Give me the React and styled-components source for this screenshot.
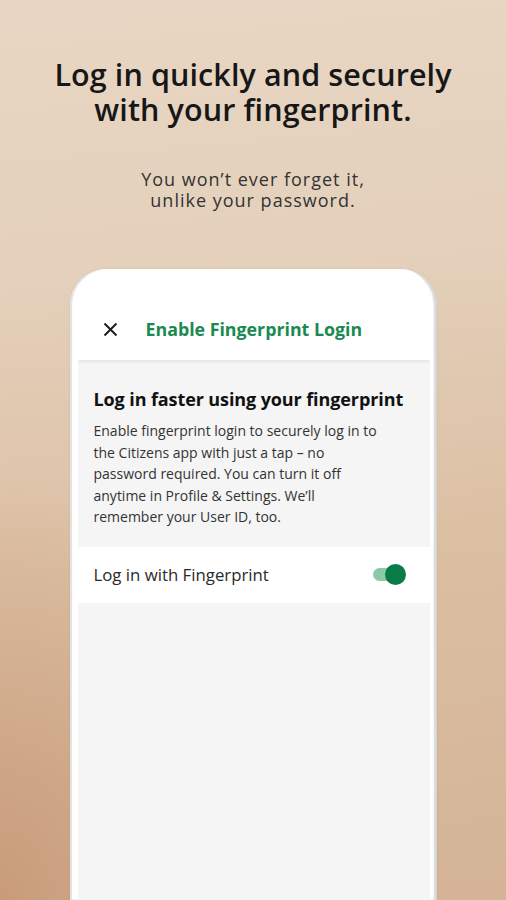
import React from 'react';
import styled, { createGlobalStyle } from 'styled-components';

const GlobalStyle = createGlobalStyle`
  html, body {
    margin: 0;
    padding: 0;
  }
  body {
    font-family: 'Open Sans', 'Noto Sans', sans-serif;
  }
`;

const Page = styled.div`
  width: 506px;
  height: 900px;
  overflow: hidden;
  background:
    radial-gradient(ellipse 260px 420px at 0% 100%, rgba(190, 135, 98, 0.55), rgba(190, 135, 98, 0) 100%),
    linear-gradient(175deg, #e8d7c4 0%, #e4d0bb 30%, #dcc0a4 60%, #d4b396 100%);
  display: flex;
  flex-direction: column;
  align-items: center;
`;

const Title = styled.h1`
  margin: 57px 0 0;
  font-family: 'Open Sans', sans-serif;
  font-size: 30.5px;
  line-height: 35px;
  font-weight: 600;
  color: #171717;
  text-align: center;
  letter-spacing: 0.1px;
`;

const Subtitle = styled.p`
  margin: 42px 0 0;
  font-family: 'Open Sans', sans-serif;
  font-size: 18px;
  line-height: 21px;
  font-weight: 400;
  color: #333;
  text-align: center;
  letter-spacing: 1px;
`;

const Phone = styled.div`
  margin-top: 58px;
  width: 367px;
  flex: 1;
  box-sizing: border-box;
  background: #fff;
  border-radius: 36px 36px 0 0;
  padding: 0 7px 0 8px;
  box-shadow: inset -3px 0 2px #d6d6d6, inset 2px 0 1px #e2e2e2, 0 0 2px rgba(0, 0, 0, 0.1);
  display: flex;
`;

const Screen = styled.div`
  flex: 1;
  background: #f5f5f5;
  display: flex;
  flex-direction: column;
  border-radius: 30px 30px 0 0;
  overflow: hidden;
`;

const Header = styled.div`
  height: 91px;
  box-sizing: border-box;
  padding: 50px 0 0 25px;
  background: #fff;
  display: flex;
  align-items: flex-start;
  gap: 28px;
  box-shadow: 0 2px 3px rgba(0, 0, 0, 0.07);
  position: relative;
`;

const Close = styled.svg`
  width: 15px;
  height: 15px;
  margin-top: 3px;
`;

const HeaderTitle = styled.div`
  font-size: 17.8px;
  font-weight: 700;
  color: #1a8a50;
  line-height: 20px;
`;

const Intro = styled.div`
  padding: 27px 16px 19px 16px;
`;

const Heading = styled.div`
  font-size: 18px;
  font-weight: 700;
  color: #111;
  line-height: 24px;
  letter-spacing: -0.1px;
`;

const Body = styled.div`
  margin-top: 9px;
  font-size: 14px;
  line-height: 21.6px;
  color: #333;
`;

const Row = styled.div`
  height: 56px;
  background: #fff;
  display: flex;
  align-items: center;
  justify-content: space-between;
  padding: 0 24px 0 16px;
`;

const RowLabel = styled.div`
  font-size: 16.8px;
  color: #2a2a2a;
`;

const Toggle = styled.div`
  position: relative;
  width: 33px;
  height: 22px;
  display: flex;
  align-items: center;
`;

const Track = styled.div`
  width: 28px;
  height: 13px;
  border-radius: 7px;
  background: #8cc9a8;
`;

const Thumb = styled.div`
  position: absolute;
  right: 0;
  top: 0;
  width: 21px;
  height: 21px;
  border-radius: 50%;
  background: #0c7b4a;
`;

export default function App() {
  return (
    <>
      <GlobalStyle />
      <Page>
        <Title>
          Log in quickly and securely
          <br />
          with your fingerprint.
        </Title>
        <Subtitle>
          You won’t ever forget it,
          <br />
          unlike your password.
        </Subtitle>
        <Phone>
          <Screen>
            <Header>
              <Close viewBox="0 0 15 15">
                <path d="M1.5 1.5 L13.5 13.5 M13.5 1.5 L1.5 13.5" stroke="#1b1b1b" strokeWidth="1.9" />
              </Close>
              <HeaderTitle>Enable Fingerprint Login</HeaderTitle>
            </Header>
            <Intro>
              <Heading>Log in faster using your fingerprint</Heading>
              <Body>
                Enable fingerprint login to securely log in to
                <br />
                the Citizens app with just a tap – no
                <br />
                password required. You can turn it off
                <br />
                anytime in Profile &amp; Settings. We’ll
                <br />
                remember your User ID, too.
              </Body>
            </Intro>
            <Row>
              <RowLabel>Log in with Fingerprint</RowLabel>
              <Toggle>
                <Track />
                <Thumb />
              </Toggle>
            </Row>
          </Screen>
        </Phone>
      </Page>
    </>
  );
}
